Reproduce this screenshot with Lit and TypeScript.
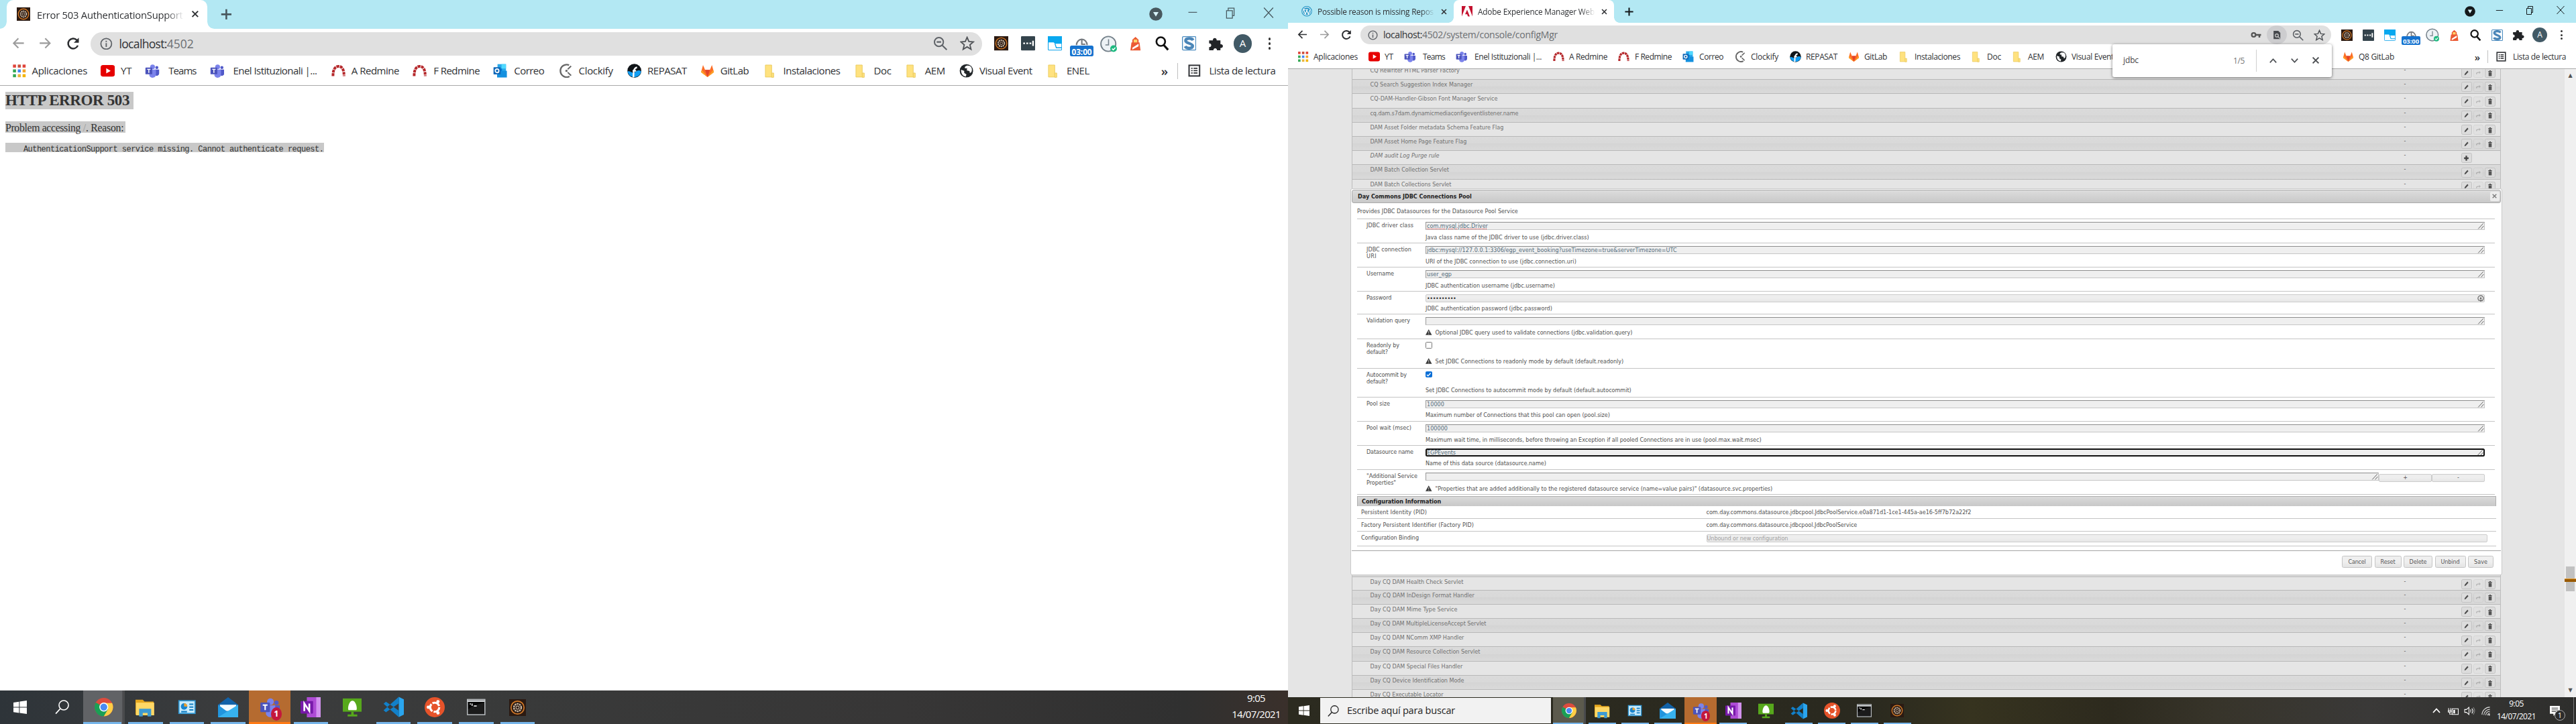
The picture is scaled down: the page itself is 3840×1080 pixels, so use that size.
import { LitElement, html, svg, css, nothing } from "lit";
import { customElement, property } from "lit/decorators.js";

const UI = '"Open Sans", "Noto Sans", sans-serif';
const VERDANA = '"DejaVu Sans", sans-serif';
const ctx = document.createElement("canvas").getContext("2d")!;

/** Text tracked so that it spans the given width. */
const fit = (text: string, width: number, size: number, family = UI, weight = "400", style = "normal") => {
  ctx.font = `${style} ${weight} ${size * 10}px ${family}`;
  const natural = ctx.measureText(text).width / 10;
  const tracking = (width - natural) / text.length;
  return html`<span style="white-space:pre;display:inline-block;font:${style} ${weight} ${size}px ${family};line-height:inherit;letter-spacing:${tracking.toFixed(3)}px;width:${width}px">${text}</span>`;
};

const teams = svg`<circle cx="8.6" cy="3.6" r="2.7" fill="#7b83eb"/><circle cx="13.4" cy="4.4" r="1.7" fill="#5059c9"/><path d="M11.5 6.5H16V11a2.6 2.6 0 0 1-4.5 1.8z" fill="#5059c9"/><path d="M5 6.5h7.4V12a3.9 3.9 0 0 1-7.4 1.6z" fill="#7b83eb"/><rect x="0.6" y="4.3" width="7.6" height="7.6" rx=".7" fill="#4b53bc"/><path d="M2.5 6.3h3.8M4.4 6.3v4" stroke="#fff" stroke-width="1.1"/>`;
const redmine = svg`<path d="M1.8 14C1.8 6.5 4 3 8 3s6.2 3.5 6.2 11" fill="none" stroke="#b5282b" stroke-width="3" stroke-dasharray="3.2 .7"/>`;
const folder = svg`<path d="M2.5 1.5h8v11l1.5.5v2H2.5z" fill="#ffe27f" stroke="#e8c85a" stroke-width=".7"/><path d="M10.5 10.5h2.6v4.8h-2.6z" fill="#ffe27f" stroke="#e8c85a" stroke-width=".7"/>`;
const aem = svg`<rect width="16" height="16" fill="#2b1a12"/><circle cx="8" cy="8" r="6.2" fill="none" stroke="#d37a28" stroke-width="1.1"/><circle cx="8" cy="8" r="3.5" fill="none" stroke="#c9b9a5" stroke-width="1.5" stroke-dasharray="1.6 .6"/><circle cx="8" cy="8" r="1.5" fill="none" stroke="#bbaa99" stroke-width=".7"/>`;
const gitlab = svg`<path d="M8 15 .8 9.6 3 1.5 5.3 7h5.4L13 1.5l2.2 8.1z" fill="#fc6d26"/><path d="M8 15 5.3 7h5.4z" fill="#e24329"/><path d="M8 15 .8 9.6 1.6 7zM8 15l7.2-5.4L14.4 7z" fill="#fca326"/>`;

const ICONS: Record<string, unknown> = {
  apps: svg`${[0, 1, 2].map(r => [0, 1, 2].map(c => svg`<rect x=${1 + c * 5.4} y=${1 + r * 5.4} width="3.4" height="3.4" fill=${[["#e0443a", "#c94f3c", "#e0443a"], ["#34a853", "#4285f4", "#f2a52c"], ["#34a853", "#e9b53b", "#f4b400"]][r][c]}/>`))}`,
  yt: svg`<rect x="0" y="1.5" width="16" height="13" rx="2.8" fill="#e60000"/><path d="M6.3 5v6l5-3z" fill="#fff"/>`,
  teams, redmine, folder, aem, gitlab,
  outlook: svg`<path d="M5 .5h9.5v8H5z" fill="#28a8ea"/><path d="M9.5.5h5v5h-5z" fill="#50d9ff"/><path d="M5 5.5h5v5H5z" fill="#0078d4"/><path d="M4.5 8 15.5 8v7.5h-11z" fill="#1490df"/><rect x=".5" y="4" width="8" height="8" rx=".6" fill="#0f67b8"/><circle cx="4.5" cy="8" r="2" fill="none" stroke="#fff" stroke-width="1.3"/>`,
  clockify: svg`<path d="M11.5 1.6A7 7 0 1 0 12 14.3" fill="none" stroke="#666" stroke-width="1.8"/><circle cx="8.6" cy="8" r="1.3" fill="#666"/><path d="M10 6.3 13.8 2.6M10 9.7l3.8 3.7" stroke="#666" stroke-width="1.5"/>`,
  repasat: svg`<circle cx="8" cy="8" r="7.8" fill="#101418"/><path d="M.3 8.6A7.8 7.8 0 0 0 15.7 8.6C12 6 10 9 8 10S3 7.5.3 8.6z" fill="#119df2"/><path d="M7 15.5C7 9 7 5 11 4M6 8h4" stroke="#fff" stroke-width="1.8" fill="none"/>`,
  globe: svg`<circle cx="8" cy="8" r="7.5" fill="#222629"/><path d="M2 6.8 5.5 8v2.4L8 12l-.7 2.5C4 14 1.8 11 2 6.8zM9 2c-2 .7-3.3 1.4-2.6 3l2.4.3-.4 2.3 3 .6.5 2.4 1.6-1c1.5-3 .4-6.3-2-7.2z" fill="#fff"/>`,
  list: svg`<rect x="1.3" y="1.2" width="13.4" height="13.6" fill="none" stroke="#303236" stroke-width="1.7"/><path d="M4 5h1.8M4 8h1.8M4 11h1.8M7 5h5M7 8h5M7 11h5" stroke="#303236" stroke-width="1.5"/>`,
  back: svg`<path d="M15 8H2M8 2 2 8l6 6" fill="none" stroke="currentColor" stroke-width="1.8"/>`,
  forward: svg`<path d="M1 8h13M8 2l6 6-6 6" fill="none" stroke="currentColor" stroke-width="1.8"/>`,
  reload: svg`<path d="M13.6 10.3A6 6 0 1 1 12.4 3.8L14 5.5" fill="none" stroke="#2b2d30" stroke-width="2"/><path d="M14.8 1v6h-6z" fill="#2b2d30"/>`,
  info: svg`<circle cx="8" cy="8" r="6.8" fill="none" stroke="#5f6368" stroke-width="1.5"/><path d="M8 7v5M8 4v1.7" stroke="#5f6368" stroke-width="1.6"/>`,
  key: svg`<circle cx="4.5" cy="8" r="2.9" fill="none" stroke="#555" stroke-width="2.2"/><path d="M7 8h8.5M13 8v4" stroke="#555" stroke-width="2.5"/>`,
  pagefind: svg`<path d="M2.5 1h8l3.5 3.6V15h-11.500z" fill="#45484c"/><circle cx="8" cy="9" r="2.6" fill="none" stroke="#d0d0d0" stroke-width="1.3"/><path d="m10 11 3.5 3.500" stroke="#d0d0d0" stroke-width="1.3"/>`,
  zoomout: svg`<circle cx="6.500" cy="6.500" r="5" fill="none" stroke="#5f6368" stroke-width="1.5"/><path d="m10.300 10.300 5 5M4 6.500h5" stroke="#5f6368" stroke-width="1.600"/>`,
  star: svg`<path d="m8 1.300 2 4.700 5 .4-3.800 3.300 1.200 5L8 12l-4.400 2.700 1.200-5L1 6.400 6 6z" fill="none" stroke="#505357" stroke-width="1.400"/>`,
  dots: svg`<rect width="16" height="16" rx="1" fill="#34434c"/><path d="M2.500 8h2M6 8h2M9.500 8h2M13.500 5v6" stroke="#fff" stroke-width="1.800"/>`,
  win: svg`<rect x=".4" y=".4" width="15.200" height="15.200" rx="1" fill="#fff" stroke="#09a1ea" stroke-width=".8"/><path d="M0 0h16v8.500H8L6.500 7H0z" fill="#09a8ef"/><path d="M8 8.500 9.500 13H16" fill="none" stroke="#09a1ea"/>`,
  timer: svg`<path d="M2 10a6 6.500 0 1 1 12 0M8 4v5h4" fill="none" stroke="#777b80" stroke-width="1.600"/>`,
  clock: svg`<circle cx="7.800" cy="8" r="7.100" fill="#edf2f5" stroke="#74818a" stroke-width="1.200"/><path d="M8 3.500V9H5" fill="none" stroke="#74818a"/><circle cx="12.800" cy="12.500" r="3.200" fill="#1eb980"/><path d="m11.300 12.500 1.200 1.200 2-2.200" fill="none" stroke="#fff"/>`,
  lighthouse: svg`<path d="M4.500 4 8 .8 11.500 4v3h1l1.200 9H2.300L3.500 7h1z" fill="#eb5a33"/><path d="M6 3.800h4V7H6z" fill="#ffd36b"/><path d="M4.500 13 11.500 8.500v2.800L4.500 15z" fill="#fff"/>`,
  lens: svg`<circle cx="6.300" cy="6" r="4.900" fill="none" stroke="#111" stroke-width="2"/><path d="m9.500 9.800 5 5.500" stroke="#111" stroke-width="2.400"/>`,
  sketch: svg`<rect x=".5" y=".5" width="15" height="15" rx="1" fill="#fff" stroke="#4b8cc0"/><path d="M12.500 4.500C11 1.500 4 2 4 5s8 3 8 6-7 3.300-8.500.3" fill="none" stroke="#4b86b8" stroke-width="3.200"/>`,
  puzzle: svg`<path d="M1 4.500h4C4.500 1 9.500 1 9 4.500h4v4c3.500-.5 3.500 4.500 0 4V15H9.300c.3-3-4-3-3.700 0H1v-3.500c3 .3 3-4.200 0-3.900z" fill="#222427"/>`,
  wp: svg`<circle cx="8" cy="8" r="7.300" fill="#fff" stroke="#2a9ac8" stroke-width="1.200"/><circle cx="8" cy="8" r="5.800" fill="#2a9ac8"/><path d="m3.200 5.500 2.700 7L8 6.500l2.400 6 2.500-7M2.800 5.500h3M6.500 5.500h3.200" fill="none" stroke="#fff" stroke-width="1.200"/>`,
  adobe: svg`<rect width="16" height="16" fill="#fff"/><path d="M0 0h6L0 16zM16 0h-6l6 16zM8 5.800 12 16H9.200L8 12.700H5z" fill="#c4122f"/>`,
  x: svg`<path d="m3 3 10 10M13 3 3 13" stroke="currentColor" stroke-width="2.300"/>`,
  thinx: svg`<path d="m2.500 2 11 12M13.500 2l-11 12" stroke="currentColor" stroke-width="1"/>`,
  plus: svg`<path d="M8 1.500v13M1.500 8h13" stroke="currentColor" stroke-width="2.200"/>`,
  min: svg`<path d="M3 8h11" stroke="currentColor"/>`,
  restore: svg`<path d="M3.500 5.500h7v9h-7zM5.500 5.500v-3h7v9h-2" fill="none" stroke="currentColor"/>`,
  media: svg`<circle cx="8" cy="8" r="7.800" fill="currentColor"/><path d="M4.800 5.500h6.400L8 11z" fill="#d9f3f9"/>`,
  up: svg`<path d="m3 11 5-5.500 5 5.500" fill="none" stroke="currentColor" stroke-width="1.800"/>`,
  down: svg`<path d="m3 5 5 5.500L13 5" fill="none" stroke="currentColor" stroke-width="1.800"/>`,
  pencil: svg`<path d="m3 13 1-3.500L11 2.500 13.500 5l-7 7z" fill="#4a4a4a"/>`,
  link: svg`<path d="M2 12V9q0-3 5-3h3V3l4 4-4 4V8.500H7Q4 8.500 4 12zM10 13H4" fill="#777"/>`,
  trash: svg`<path d="M2.500 3.200h11v2h-11zM6 1.500h4v2H6zM3.500 6h9v9h-9z" fill="#4a4a4a"/><path d="M6.200 7v7M8 7v7M9.800 7v7" stroke="#777" stroke-width=".6"/>`,
  addc: svg`<path d="M8 2v12M2 8h12" stroke="#444" stroke-width="4"/>`,
  warn: svg`<path d="M8 .5 16 15.500H0z" fill="#3a3a3a"/><path d="M8 5v5.500M8 12v2" stroke="#ddd" stroke-width="1.500"/>`,
  grip: svg`<path d="M2 15 14 2M9 15l6-7" stroke="#444" stroke-width="1.300"/>`,
  pwd: svg`<path d="M5 13.800A6.500 6.500 0 1 1 10.500 14" fill="none" stroke="#777" stroke-width="2.200"/><circle cx="8" cy="7.800" r="2.300" fill="#666"/><path d="M4.500 11h7l-2 4.500h-3z" fill="#777"/>`,
  windows: svg`<path d="M0 2.300 6.700 1.300V7.600H0zM7.500 1.200 16 0v7.600H7.500zM0 8.400h6.700v6.300L0 13.700zM7.500 8.400H16V16l-8.500-1.200z" fill="#fff"/>`,
  search: svg`<circle cx="9.800" cy="6" r="5.300" fill="none" stroke="currentColor" stroke-width="1.200"/><path d="M6 9.800.8 15.500" stroke="currentColor" stroke-width="1.300"/>`,
  chrome: svg`<circle cx="8" cy="8" r="8" fill="#dd4b3e"/><path d="M8 8 1.070 4A8 8 0 0 0 8 16l4-6z" fill="#1a9f55"/><path d="M8 4.500h7.200A8 8 0 0 1 8 16l3.500-6z" fill="#ffce45"/><circle cx="8" cy="8" r="3.900" fill="#fff"/><circle cx="8" cy="8" r="3" fill="#4a8af4"/>`,
  explorer: svg`<path d="M0 1.500h6l1.500 1.500H15v11H0z" fill="#e6a71e"/><path d="M.5 4H15.500v10.500H.5z" fill="#ffd866"/><path d="M3 15.500V9h10v6.500h-3v-3H6v3z" fill="#3d9bd3"/>`,
  control: svg`<rect x="1" y="2.500" width="14" height="11" fill="#c9ebfc" stroke="#3098d4"/><circle cx="5.500" cy="7.500" r="2.800" fill="#1884cf"/><path d="M5.500 7.500V4.700a2.800 2.800 0 0 1 2.800 2.800z" fill="#f2a22c"/><path d="M10 5.500h3.500M10 8h3.500M10 10.500h3.500M3 12h5" stroke="#1680c4" stroke-width="1.200"/>`,
  mail: svg`<path d="M0 6 8 0l8 6v10H0z" fill="#1262a8"/><path d="M1.500 6h13v5h-13z" fill="#f3fbff"/><path d="M0 6l8 6 8-6v10H0z" fill="#2195de"/><path d="m0 16 16-10v10z" fill="#37b2ef"/>`,
  onenote: svg`<path d="M5 0h11v16H5z" fill="#ae4bd5"/><path d="M12.500 0H16v16h-3.500z" fill="#d291ee"/><rect y="3" width="10" height="10" rx=".6" fill="#7719aa"/><path d="M3 11V5l4 6V5" fill="none" stroke="#fff" stroke-width="1.400"/>`,
  green: svg`<path d="M0 .5h16v11H0z" fill="#57a81c"/><path d="M8 2.300c3 0 4.500 7.500 3 7.900H5C3.500 9.800 5 2.300 8 2.300z" fill="#fff"/><path d="M7 11.500h2v2.300h3v1.700H4v-1.700h3z" fill="#57a81c"/>`,
  vscode: svg`<path d="m12 .3 4 2v11.400l-4 2z" fill="#2aa5ee"/><path d="M12 .3v4.900L2.200 12 .4 10.500zM12 15.700v-4.900L2.200 4 .4 5.500z" fill="#1280c9"/>`,
  ubuntu: svg`<circle cx="8" cy="8" r="8" fill="#e6532a"/><circle cx="8" cy="8" r="3.600" fill="none" stroke="#fff" stroke-width="1.700" stroke-dasharray="6.500 1"/><circle cx="2.900" cy="8" r="1.300" fill="#fff"/><circle cx="10.600" cy="3.500" r="1.300" fill="#fff"/><circle cx="10.600" cy="12.500" r="1.300" fill="#fff"/>`,
  cmd: svg`<rect x=".4" y="1.400" width="15.200" height="13.200" fill="#050505" stroke="#b9bdc0" stroke-width=".9"/><path d="M.5 2h15v1.500H.5z" fill="#d4d7d9"/><path d="M2.500 5.300h1M4.500 5v2M6 7h2.500" stroke="#ddd"/><path d="M.8 10Q6 6 15 4v10H.8z" fill="#fff" opacity=".09"/>`,
  battery: svg`<path d="M7 5h8.500v8H7zM5 4v4M2 4v4M1.500 7.500h4v2h-4zM3.500 9v3.500H7" fill="none" stroke="#fff"/><path d="M8.500 6.500H11v5H8.500z" fill="#fff"/>`,
  sound: svg`<path d="M1 6h2.500L7 3v10L3.500 10H1zM9 6q1.500 2 0 4M11 4.500q3 3.500 0 7" fill="none" stroke="#fff"/><path d="M13 3q4 5 0 10" fill="none" stroke="#888"/>`,
  wifi: svg`<g fill="none" stroke="#ddd" stroke-width="1.200"><path d="M2 14A12.500 12.500 0 0 1 14.500 2M5 14.500a9.500 9.500 0 0 1 9.500-9M8 14.800A6.500 6.500 0 0 1 14.500 8.500M11 15a4 4 0 0 1 3.500-3.500"/></g><circle cx="13.500" cy="14.200" r="1.200" fill="#fff"/>`,
  note: svg`<path d="M1 1h14v11H9l-3 3v-3H1z" fill="#fff"/><path d="M3.500 4h9M3.500 6.500h9M3.500 9h6" stroke="#333"/>`,
};

const icon = (name: string, w: number, h = w) =>
  html`<svg viewBox="0 0 16 16" width=${w} height=${h} preserveAspectRatio="none" style="display:block;flex:none">${ICONS[name]}</svg>`;

/* [icon, label, icon start, label start, label width] */
type Mark = [string, string, number, number, number];
const MARKS: Mark[] = [
  ["apps", "Aplicaciones", 14, 38, 66], ["yt", "YT", 120, 144, 13], ["teams", "Teams", 173, 201, 33],
  ["teams", "Enel Istituzionali |...", 250, 278, 100], ["redmine", "A Redmine", 395, 419, 57],
  ["redmine", "F Redmine", 492, 517, 55], ["outlook", "Correo", 588, 613, 36], ["clockify", "Clockify", 666, 690, 41],
  ["repasat", "REPASAT", 748, 772, 47], ["gitlab", "GitLab", 835, 859, 34], ["folder", "Instalaciones", 910, 934, 68],
  ["folder", "Doc", 1018, 1042, 21], ["folder", "AEM", 1079, 1103, 24], ["globe", "Visual Event", 1144, 1168, 63],
  ["folder", "ENEL", 1248, 1272, 27],
];

interface Tab { icon: string; title: string; width: number; active: boolean; }

@customElement("browser-frame")
class BrowserFrame extends LitElement {
  @property({ attribute: false }) tabs: Tab[] = [];
  @property({ attribute: false }) path: [string, number, string, number] = ["", 0, "", 0];
  @property({ attribute: false }) marks: Mark[] = MARKS;
  @property({ type: Boolean, reflect: true }) focused = false;
  static styles = css`
    :host { display: flex; flex-direction: column; height: 102.500px; background: #fff; color: #2f3134; box-sizing: border-box; border-bottom: 1.300px solid #a9a9a9; flex: none; }
    .strip { height: 34px; background: #b3e8f3; display: flex; flex: none; align-items: stretch; padding-left: 8px; color: #48585e; }
    :host([focused]) .strip { color: #14191b; }
    .tab { width: 239px; display: flex; align-items: center; box-sizing: border-box; padding: 0 9px 0 12px; gap: 8px; position: relative; color: #2f3134; line-height: 34px; }
    .tab.active { background: #fff; border-radius: 8px 8px 0 0; }
    .tab.active::before, .tab.active::after { content: ""; position: absolute; bottom: 0; width: 8px; height: 8px; }
    .tab.active::before { left: -8px; background: radial-gradient(circle at 0 0, transparent 7.500px, #fff 8px); }
    .tab.active::after { right: -8px; background: radial-gradient(circle at 100% 0, transparent 7.500px, #fff 8px); }
    .title { flex: 1; overflow: hidden; white-space: nowrap; mask-image: linear-gradient(90deg, #000 88%, transparent); }
    .plus { display: flex; align-items: center; margin-left: 15px; }
    .controls { margin-left: auto; display: flex; align-items: center; gap: 30px; padding: 0 15px 4px 0; }
    .media { margin: 4px -2px 0 0; }
    .bar { height: 36px; display: flex; align-items: center; flex: none; box-sizing: border-box; padding-left: 14px; }
    .nav { display: flex; gap: 17.500px; width: 94px; }
    .dim { color: #9c9c9c; }
    .omni { flex: 1; height: 28px; border-radius: 14px; background: #e0e0e0; display: flex; align-items: center; padding: 0 9px 0 11px; line-height: 28px; }
    .omni .url { margin-left: 8px; flex: 1; }
    .url .dimtext { color: #6b6e72; }
    .tools { display: flex; align-items: center; gap: 15px; }
    .circle { width: 30px; height: 28px; border-radius: 50%; background: #cdcdcf; display: grid; place-items: center; margin: 0 -7px; }
    .ext { display: flex; width: 365px; align-items: center; padding-left: 7px; box-sizing: border-box; flex: none; }
    .slot { width: 32px; display: grid; place-items: center; position: relative; flex: none; }
    .badge { position: absolute; top: 10.500px; background: #1673cf; color: #fff; border-radius: 2px; height: 13px; width: 28px; text-align: center; line-height: 12.500px; }
    .avatar { width: 27px; height: 27px; border-radius: 50%; background: #425a66; color: #fff; text-align: center; font: 12px/27px "Open Sans", sans-serif; }
    :host(:not([focused])) .avatar, :host([focused]) .avatar { width: 22px; height: 22px; line-height: 22px; }
    .more i { display: block; width: 3px; height: 3px; border-radius: 50%; background: #333; margin: 2.500px; }
    .marks { height: 29px; display: flex; align-items: center; padding-left: 14px; line-height: 28px; }
    .mark { display: grid; align-items: center; }
    .end { margin-left: auto; display: flex; align-items: center; gap: 10px; padding-right: 15px; }
    .chev { font: 600 15px/20px "Open Sans"; margin-right: 1px; }
    .sep { width: 1px; height: 19px; background: #c0c0c0; margin-right: 2px; }
  `;
  render() {
    const [host, hw, rest, rw] = this.path;
    return html`
      <div class="strip">
        ${this.tabs.map(t => html`<div class="tab ${t.active ? "active" : ""}">${icon(t.icon, 16, t.icon === "aem" ? 16 : 15.5)}<div class="title">${fit(t.title, t.width, 11.800)}</div>${icon("x", 11)}</div>`)}
        <div class="plus">${icon("plus", 15)}</div>
        <div class="controls"><div class="media">${icon("media", 16)}</div>${icon("min", 15)}${icon("restore", 16)}${icon("thinx", 16)}</div>
      </div>
      <div class="bar">
        <div class="nav"><span class=${this.focused ? "" : "dim"}>${icon("back", 15)}</span><span class="dim">${icon("forward", 15)}</span>${icon("reload", 16)}</div>
        <div class="omni">${icon("info", 15)}<div class="url">${fit(host, hw, 14)}<span class="dimtext">${fit(rest, rw, 14)}</span></div>
          <div class="tools">${this.focused ? html`${icon("key", 16)}<span class="circle">${icon("pagefind", 14)}</span>` : nothing}${icon("zoomout", 17)}${icon("star", 17)}</div>
        </div>
        <div class="ext">
          ${["aem", "dots", "win", "timer", "clock", "lighthouse", "lens", "sketch", "puzzle"].map(n => html`<div class="slot">${icon(n, n === "clock" ? 20 : n === "puzzle" ? 18 : 17)}${n === "timer" ? html`<div class="badge">${fit("03:00", 24, 9.500, UI, "700")}</div>` : nothing}</div>`)}
          <div class="slot"><div class="avatar">A</div></div>
          <div class="slot"><div class="more"><i></i><i></i><i></i></div></div>
        </div>
      </div>
      <div class="marks">
        ${this.marks.map((m, i) => {
          const next = this.marks[i + 1]?.[2] ?? m[3] + m[4];
          return html`<div class="mark" style="width:${next - m[2]}px;grid-template-columns:${m[3] - m[2]}px 1fr">${icon(m[0], m[0] === "folder" ? 15 : 17, 17)}${fit(m[1], m[4], 12)}</div>`;
        })}
        <div class="end"><span class="chev">»</span><span class="sep"></span>${icon("list", 15)}${fit("Lista de lectura", 79, 12)}</div>
      </div>`;
  }
}

@customElement("task-bar")
class TaskBar extends LitElement {
  @property({ type: Boolean, reflect: true }) wide = false;
  static styles = css`
    :host { display: flex; height: 40px; flex: none; background: linear-gradient(90deg, #2e3439, #3b3c3d 18%, #393a3a 40%, #373636 70%, #303030 92%, #3a302b); color: #fff; }
    :host([wide]) { background: linear-gradient(90deg, #2c2b20, #2a291f 45%, #36331f 53%, #2d2a1e 64%, #37342a 72%, #3a3938 84%, #2e2e2c); }
    .start { width: 48px; display: grid; place-items: center; }
    .lens { width: 51.500px; display: grid; place-items: center; }
    .box { width: 344px; height: 38px; margin-top: 1px; margin-right: 3px; background: #f2f2f2; color: #222; display: flex; align-items: center; gap: 12px; padding-left: 11px; box-sizing: border-box; line-height: 38px; }
    .app { width: 49.300px; display: grid; place-items: center; position: relative; margin-right: 0; }
    :host([wide]) .app { width: 48.900px; }
    .app.chrome, .app.busy { background: #616366; }
    :host([wide]) .app.chrome { background: #5c5a4d; }
    .app.chrome { box-shadow: inset -3px 0 #4a4b4d; }
    .app.busy, :host([wide]) .app.busy { background: #b56b30; }
    .run::after { content: ""; position: absolute; bottom: 0; left: 4px; right: 4px; height: 2.500px; background: #76b5ea; }
    .chrome.run::after { left: 0; }
    .busy.run::after { background: #ff7a14; left: 0; right: 0; }
    .count { position: absolute; right: 10px; bottom: 4px; width: 13px; height: 16px; border-radius: 50%; background: #c4183c; text-align: center; font: 700 10px/16px "Open Sans"; }
    .tray { margin-left: auto; display: flex; align-items: center; gap: 8px; }
    .time { text-align: center; line-height: 19px; display: flex; flex-direction: column; align-items: center; margin-right: 9px; height: 40px; }
    :host([wide]) .time { margin: 0 11px 0 1px; }
    .note { position: relative; width: 30px; height: 40px; display: flex; align-items: center; padding-left: 1px; box-sizing: border-box; margin-right: -1px; }
    .note b { position: absolute; left: 9px; top: 19px; width: 14px; height: 14px; border-radius: 50%; border: 1px solid #aaa; background: #2b2b2b; font: 11px/14px "Open Sans"; text-align: center; }
    .edge { width: 1px; height: 40px; background: #777; margin-right: 3px; }
  `;
  render() {
    const apps: [string, number][] = [["chrome", 22], ["explorer", 23], ["control", 22], ["mail", 24], ["teams", 24], ["onenote", 24], ["green", 23], ["vscode", 25], ["ubuntu", 24], ["cmd", 22], ["aem", 20]];
    return html`
      <div class="start">${icon("windows", 16)}</div>
      ${this.wide ? html`<div class="box">${icon("search", 17)}${fit("Escribe aquí para buscar", 161, 14.500)}</div>` : html`<div class="lens">${icon("search", 17)}</div>`}
      ${apps.map(([n, s]) => html`<div class="app ${n === "green" ? "" : "run"} ${n === "teams" ? "busy" : n}">${icon(n, s, s)}${n === "teams" ? html`<span class="count">1</span>` : nothing}</div>`)}
      <div class="tray">
        ${this.wide ? html`${icon("up", 16)}${icon("battery", 17)}${icon("sound", 17)}${icon("wifi", 15)}` : nothing}
        <div class="time">${fit("9:05", 21.500, 12)}${fit("14/07/2021", 58, 12)}</div>
        ${this.wide ? html`<div class="note">${icon("note", 17)}<b>1</b></div><div class="edge"></div>` : nothing}
      </div>`;
  }
}

const v = (t: string, w: number, weight = "400", style = "normal") => fit(t, w, 8.100, VERDANA, weight, style);

/* [name, width, factory row without configurations] */
type Row = [string, number, boolean?];
const ABOVE: Row[] = [
  ["CQ Rewriter HTML Parser Factory", 133.500], ["CQ Search Suggestion Index Manager", 153], ["CQ-DAM-Handler-Gibson Font Manager Service", 190],
  ["cq.dam.s7dam.dynamicmediaconfigeventlistener.name", 221], ["DAM Asset Folder metadata Schema Feature Flag", 199], ["DAM Asset Home Page Feature Flag", 144],
  ["DAM audit Log Purge rule", 103, true], ["DAM Batch Collection Servlet", 117.500], ["DAM Batch Collections Servlet", 121],
];
const BELOW: Row[] = [
  ["Day CQ DAM Health Check Servlet", 139], ["Day CQ DAM InDesign Format Handler", 155.500], ["Day CQ DAM Mime Type Service", 130],
  ["Day CQ DAM MultipleLicenseAccept Servlet", 173], ["Day CQ DAM NComm XMP Handler", 140], ["Day CQ DAM Resource Collection Servlet", 164],
  ["Day CQ DAM Special Files Handler", 138], ["Day CQ Device Identification Mode", 140], ["Day CQ Executable Locator", 109],
];

interface Field { label: [string, number][]; kind?: string; value?: [string, number]; help: [string, number]; height: number; warn?: boolean; gap?: number; }
const FIELDS: Field[] = [
  { label: [["JDBC driver class", 70]], kind: "spell", value: ["com.mysql.jdbc.Driver", 91], help: ["Java class name of the JDBC driver to use (jdbc.driver.class)", 244], height: 36 },
  { label: [["JDBC connection", 67], ["URI", 15]], value: ["jdbc:mysql://127.0.0.1:3306/egp_event_booking?useTimezone=true&serverTimezone=UTC", 373], help: ["URI of the JDBC connection to use (jdbc.connection.uri)", 225], height: 36 },
  { label: [["Username", 41]], value: ["user_egp", 37], help: ["JDBC authentication username (jdbc.username)", 193], height: 36 },
  { label: [["Password", 37.500]], kind: "password", value: ["••••••••••", 43.500], help: ["JDBC authentication password (jdbc.password)", 189], height: 34.200, gap: 3 },
  { label: [["Validation query", 65]], value: ["", 0], help: ["Optional JDBC query used to validate connections (jdbc.validation.query)", 294], height: 37, warn: true },
  { label: [["Readonly by", 49], ["default?", 32]], kind: "off", help: ["Set JDBC Connections to readonly mode by default (default.readonly)", 281], height: 43.800, warn: true },
  { label: [["Autocommit by", 60], ["default?", 32]], kind: "on", help: ["Set JDBC Connections to autocommit mode by default (default.autocommit)", 307], height: 43 },
  { label: [["Pool size", 35]], value: ["10000", 26], help: ["Maximum number of Connections that this pool can open (pool.size)", 275], height: 36.200 },
  { label: [["Pool wait (msec)", 67]], value: ["100000", 31], help: ["Maximum wait time, in milliseconds, before throwing an Exception if all pooled Connections are in use (pool.max.wait.msec)", 501], height: 36 },
  { label: [["Datasource name", 70]], kind: "focus", value: ["EGPEvents", 43], help: ["Name of this data source (datasource.name)", 180], height: 36 },
  { label: [["\"Additional Service", 76], ["Properties\"", 44]], kind: "multi", value: ["", 0], help: ["\"Properties that are added additionally to the registered datasource service (name=value pairs)\" (datasource.svc.properties)", 503], height: 37, warn: true, gap: 3.500 },
];

@customElement("config-console")
class ConfigConsole extends LitElement {
  static styles = css`
    :host { display: flex; flex: 1; min-height: 0; overflow: hidden; background: #e5e5e5; color: #505050; }
    .content { flex: 1; min-width: 0; padding: 0 95px 0 95px; display: flex; flex-direction: column; overflow: hidden; }
    .list { border: solid #bdbdbd; border-width: 0 1px; flex: none; overflow: hidden; color: #707070; }
    .above { height: 178.500px; }
    .above .row:first-child { margin-top: -4.500px; }
    .below { height: 182px; background: #d8d8d8; padding-top: 1.500px; box-sizing: border-box; }
    .below .row:first-child { border-top: 1px solid #bbb; }
    .row { height: 21.200px; box-sizing: border-box; border-bottom: 1px solid #b8b8b8; display: flex; line-height: 15px; padding-left: 26.500px; background: #e5e5e5; }
    .row.alt { background: linear-gradient(#dadada, #d9d9d9 50%, #d4d4d4 52%, #dadada); }
    .dash { margin-left: auto; width: 85.500px; font: 8px/14px "DejaVu Sans"; color: #555; }
    .acts { width: 58px; display: flex; gap: 2px; padding-top: 3.300px; box-sizing: border-box; }
    .act { width: 15.500px; height: 15px; box-sizing: border-box; border: 1px solid #c3c3c3; border-radius: 2.500px; background: #dcdcdc; display: grid; place-items: center; }
    .act.faint { opacity: .42; }
    .dialog { margin: 0 -2px; height: 577px; flex: none; box-sizing: border-box; background: #fff; border: 1px solid #c9c9c9; border-radius: 3px; padding: 1px; display: flex; flex-direction: column; }
    .head { height: 19.500px; flex: none; box-sizing: border-box; border: 1px solid #aaa; border-radius: 3px; background: linear-gradient(#dcdcdc, #c9c9c9); color: #222; display: flex; align-items: center; justify-content: space-between; padding: 0 1.500px 0 8px; }
    .close { width: 13.500px; height: 13.500px; border-radius: 2px; background: #ededed; color: #777; display: grid; place-items: center; }
    .body { padding: 0 9.500px 0 8px; flex: 1; }
    .intro { height: 23.500px; line-height: 20px; box-sizing: border-box; }
    .field { box-sizing: border-box; border-top: 1px solid #c4c4c4; display: grid; grid-template-columns: 88px 1fr; padding: 4px 14.500px 0 14px; }
    .label { line-height: 10px; display: flex; flex-direction: column; }
    .input { height: 12px; box-sizing: border-box; border: 1px solid #c6c6c6; border-top: 1.500px solid #8d8d8d; border-left-color: #999; background: #efefef; display: flex; justify-content: space-between; color: #526b7b; line-height: 10px; padding-left: 1px; align-items: center; flex: 1; }
    .input.password { border: 1px solid #ccc; border-radius: 2px; background: linear-gradient(#eee 50%, #e6e6e6); color: #333; }
    .input.focus { border: 2px solid #101010; border-radius: 2.500px; height: 11.500px; padding-left: 0; }
    .input.spell .val { text-decoration: underline dotted #d33; }
    .val { display: flex; }
    .multi { display: flex; align-items: flex-start; }
    .step { width: 79px; height: 12px; margin-top: 2px; box-sizing: border-box; border: 1px solid #ccc; border-radius: 2px; background: linear-gradient(#eee 50%, #e5e5e5); text-align: center; font: 8px/10px "DejaVu Sans"; }
    .check { width: 9.500px; height: 9.500px; box-sizing: border-box; border: 1px solid #777; border-radius: 1.500px; margin: 0 0 14px; background: #fff; }
    .check.on { background: #0b6fd6; border-color: #0b6fd6; }
    .help { display: flex; align-items: center; gap: 5px; line-height: 12px; }
    .infohead { height: 15px; margin: 2px -2px 0 0; border: 1px solid #b0b0b0; border-bottom: 0; background: linear-gradient(#dadada, #c8c8c8); color: #222; line-height: 14px; padding-left: 6px; box-sizing: border-box; display: flex; }
    .line { display: grid; grid-template-columns: 514.500px 1fr; box-sizing: border-box; border-bottom: 1px solid #c4c4c4; height: 19px; line-height: 18px; padding-left: 6px; margin-right: -2px; }
    .line.tall { height: 21.500px; }
    .bind { height: 12px; margin: 4px 12.500px 0 0; border: 1px solid #ccc; border-radius: 2px; box-sizing: border-box; background: linear-gradient(#eee 50%, #e6e6e6); line-height: 10px; color: #a0a0a0; display: flex; }
    .foot { border-top: 1.300px solid #a5a5a5; height: 35px; display: flex; justify-content: flex-end; gap: 3.500px; padding: 7px 11px 0 0; box-sizing: border-box; line-height: 17px; color: #555; }
    .btn { height: 18px; box-sizing: border-box; border: 1px solid #c4c4c4; border-radius: 2.500px; background: linear-gradient(#efefef 50%, #e4e4e4); display: flex; justify-content: center; line-height: 16px; }
    .scroll { width: 17px; background: #f0f0f0; display: flex; flex-direction: column; justify-content: space-between; align-items: center; padding: 6px 0 6px; box-sizing: border-box; color: #505050; font: 8px/8px "DejaVu Sans"; }
    .thumb { width: 13px; height: 37px; background: #c1c1c1; display: flex; align-items: center; justify-content: center; margin-top: 728.500px; flex: none; }
    .hit { width: 17px; height: 5px; flex: none; background: #9a5a00; border-top: 1px solid #e79a2b; box-sizing: border-box; margin-top: 4px; }
    .gap { flex: 1; }
  `;
  private rows(rows: Row[]) {
    return rows.map(([name, w, factory], i) => html`<div class="row ${i % 2 ? "alt" : ""}">${v(name, w, "400", factory ? "italic" : "normal")}<span class="dash">-</span>
      <div class="acts"><span class="act">${icon(factory ? "addc" : "pencil", 9, 10)}</span>${factory ? nothing : html`<span class="act faint">${icon("link", 9)}</span><span class="act">${icon("trash", 8, 10)}</span>`}</div></div>`);
  }
  private control(f: Field) {
    if (f.kind === "on" || f.kind === "off")
      return html`<div class="check ${f.kind}">${f.kind === "on" ? html`<svg viewBox="0 0 8 8" width="7.5" height="7.5" style="display:block"><path d="m1 4.200 2 2L7 1.600" fill="none" stroke="#fff" stroke-width="1.400"/></svg>` : nothing}</div>`;
    const input = html`<div class="input ${f.kind ?? ""}"><span class="val">${f.value && f.value[0] ? v(...f.value) : nothing}</span>${icon(f.kind === "password" ? "pwd" : "grip", 10)}</div>`;
    return f.kind === "multi" ? html`<div class="multi">${input}<div class="step">+</div><div class="step">-</div></div>` : input;
  }
  render() {
    return html`
      <div class="content">
        <div class="list above">${this.rows(ABOVE)}</div>
        <div class="dialog">
          <div class="head">${v("Day Commons JDBC Connections Pool", 170, "700")}<span class="close">${icon("x", 9)}</span></div>
          <div class="body">
            <div class="intro">${v("Provides JDBC Datasources for the Datasource Pool Service", 240)}</div>
            ${FIELDS.map(f => html`<div class="field" style="height:${f.height}px">
              <div class="label">${f.label.map(l => v(...l))}</div>
              <div>${this.control(f)}<div class="help" style="margin-top:${f.kind === "on" || f.kind === "off" ? -1 : f.gap ?? 4.5}px">${f.warn ? icon("warn", 9.500, 9) : nothing}${v(...f.help)}</div></div>
            </div>`)}
            <div class="info">
              <div class="field" style="height:1px;padding:0"></div>
              <div class="infohead">${v("Configuration Information", 118, "700")}</div>
              <div class="line">${v("Persistent Identity (PID)", 98)}${v("com.day.commons.datasource.jdbcpool.JdbcPoolService.e0a871d1-1ce1-445a-ae16-5ff7b72a22f2", 395)}</div>
              <div class="line">${v("Factory Persistent Identifier (Factory PID)", 168)}${v("com.day.commons.datasource.jdbcpool.JdbcPoolService", 225)}</div>
              <div class="line tall">${v("Configuration Binding", 86)}<div class="bind">${v("Unbound or new configuration", 121)}</div></div>
            </div>
          </div>
          <div class="foot">${([["Cancel", 26, 45], ["Reset", 22, 40], ["Delete", 26, 43], ["Unbind", 28, 46], ["Save", 20, 38]] as [string, number, number][]).map(([t, w, bw]) => html`<div class="btn" style="width:${bw}px">${v(t, w)}</div>`)}</div>
        </div>
        <div class="list below">${this.rows(BELOW)}</div>
      </div>
      <div class="scroll"><span>▲</span><div class="thumb"><span class="hit"></span></div><span class="gap"></span><span>▼</span></div>`;
  }
}

@customElement("app-root")
class AppRoot extends LitElement {
  static styles = css`
    :host { display: flex; width: 3840px; height: 1080px; overflow: hidden; background: #fff; }
    .screen { display: flex; flex-direction: column; position: relative; flex: none; }
    .left { width: 1536px; height: 864px; zoom: 1.25; }
    .right { width: 1920px; height: 1080px; }
    .error { flex: 1; padding: 6.800px 6.400px; color: #333; display: flex; flex-direction: column; align-items: flex-start; }
    .sel { background: #c8c8c8; box-sizing: border-box; display: block; }
    .h { height: 21px; width: 153px; line-height: 20px; }
    .p { height: 13.600px; width: 143px; margin-top: 14.500px; line-height: 13.600px; }
    .p .faint { color: #999; }
    .c { height: 11.200px; width: 380px; margin-top: 12px; line-height: 10.800px; padding-left: 21.500px; }
    .find { position: absolute; left: 1229px; top: 65.500px; width: 327px; height: 49px; background: #fff; border-radius: 3px; box-shadow: 0 1px 4px #0008; display: flex; align-items: center; box-sizing: border-box; padding: 0 17px 0 16px; color: #444; line-height: 48px; }
    .count { margin-left: auto; color: #777; }
    .bar { width: 1px; height: 33px; background: #d0d0d0; margin: 0 17px 0 17px; }
    .icons { display: flex; gap: 17px; color: #4c4f53; }
  `;
  render() {
    const S = '"Liberation Serif", serif';
    return html`
      <div class="screen left">
        <browser-frame .tabs=${[{ icon: "aem", title: "Error 503 AuthenticationSupport", width: 174, active: true }]} .path=${["localhost:", 57, "4502", 32]}></browser-frame>
        <div class="error">
          <div class="sel h">${fit("HTTP ERROR 503", 149, 18.400, S, "700")}</div>
          <div class="sel p">${fit("Problem accessing ", 92.500, 12.600, S)}<span class="faint">${fit("/", 3.500, 12.600, S)}</span>${fit(". Reason:", 45, 12.600, S)}</div>
          <div class="sel c">${fit("AuthenticationSupport service missing. Cannot authenticate request.", 358, 9.600, '"Liberation Mono", monospace')}</div>
        </div>
        <task-bar></task-bar>
      </div>
      <div class="screen right">
        <browser-frame focused .tabs=${[{ icon: "wp", title: "Possible reason is missing Repos", width: 173, active: false }, { icon: "adobe", title: "Adobe Experience Manager Web", width: 174, active: true }]}
          .path=${["localhost:", 58, "4502/system/console/configMgr", 202]} .marks=${[...MARKS, ["gitlab", "Q8 GitLab", 1572, 1596, 53]]}></browser-frame>
        <config-console></config-console>
        <task-bar wide></task-bar>
        <div class="find">${fit("jdbc", 23, 12)}<span class="count">${fit("1/5", 17, 12)}</span><span class="bar"></span><span class="icons">${icon("up", 15)}${icon("down", 15)}${icon("x", 14)}</span></div>
      </div>`;
  }
}
